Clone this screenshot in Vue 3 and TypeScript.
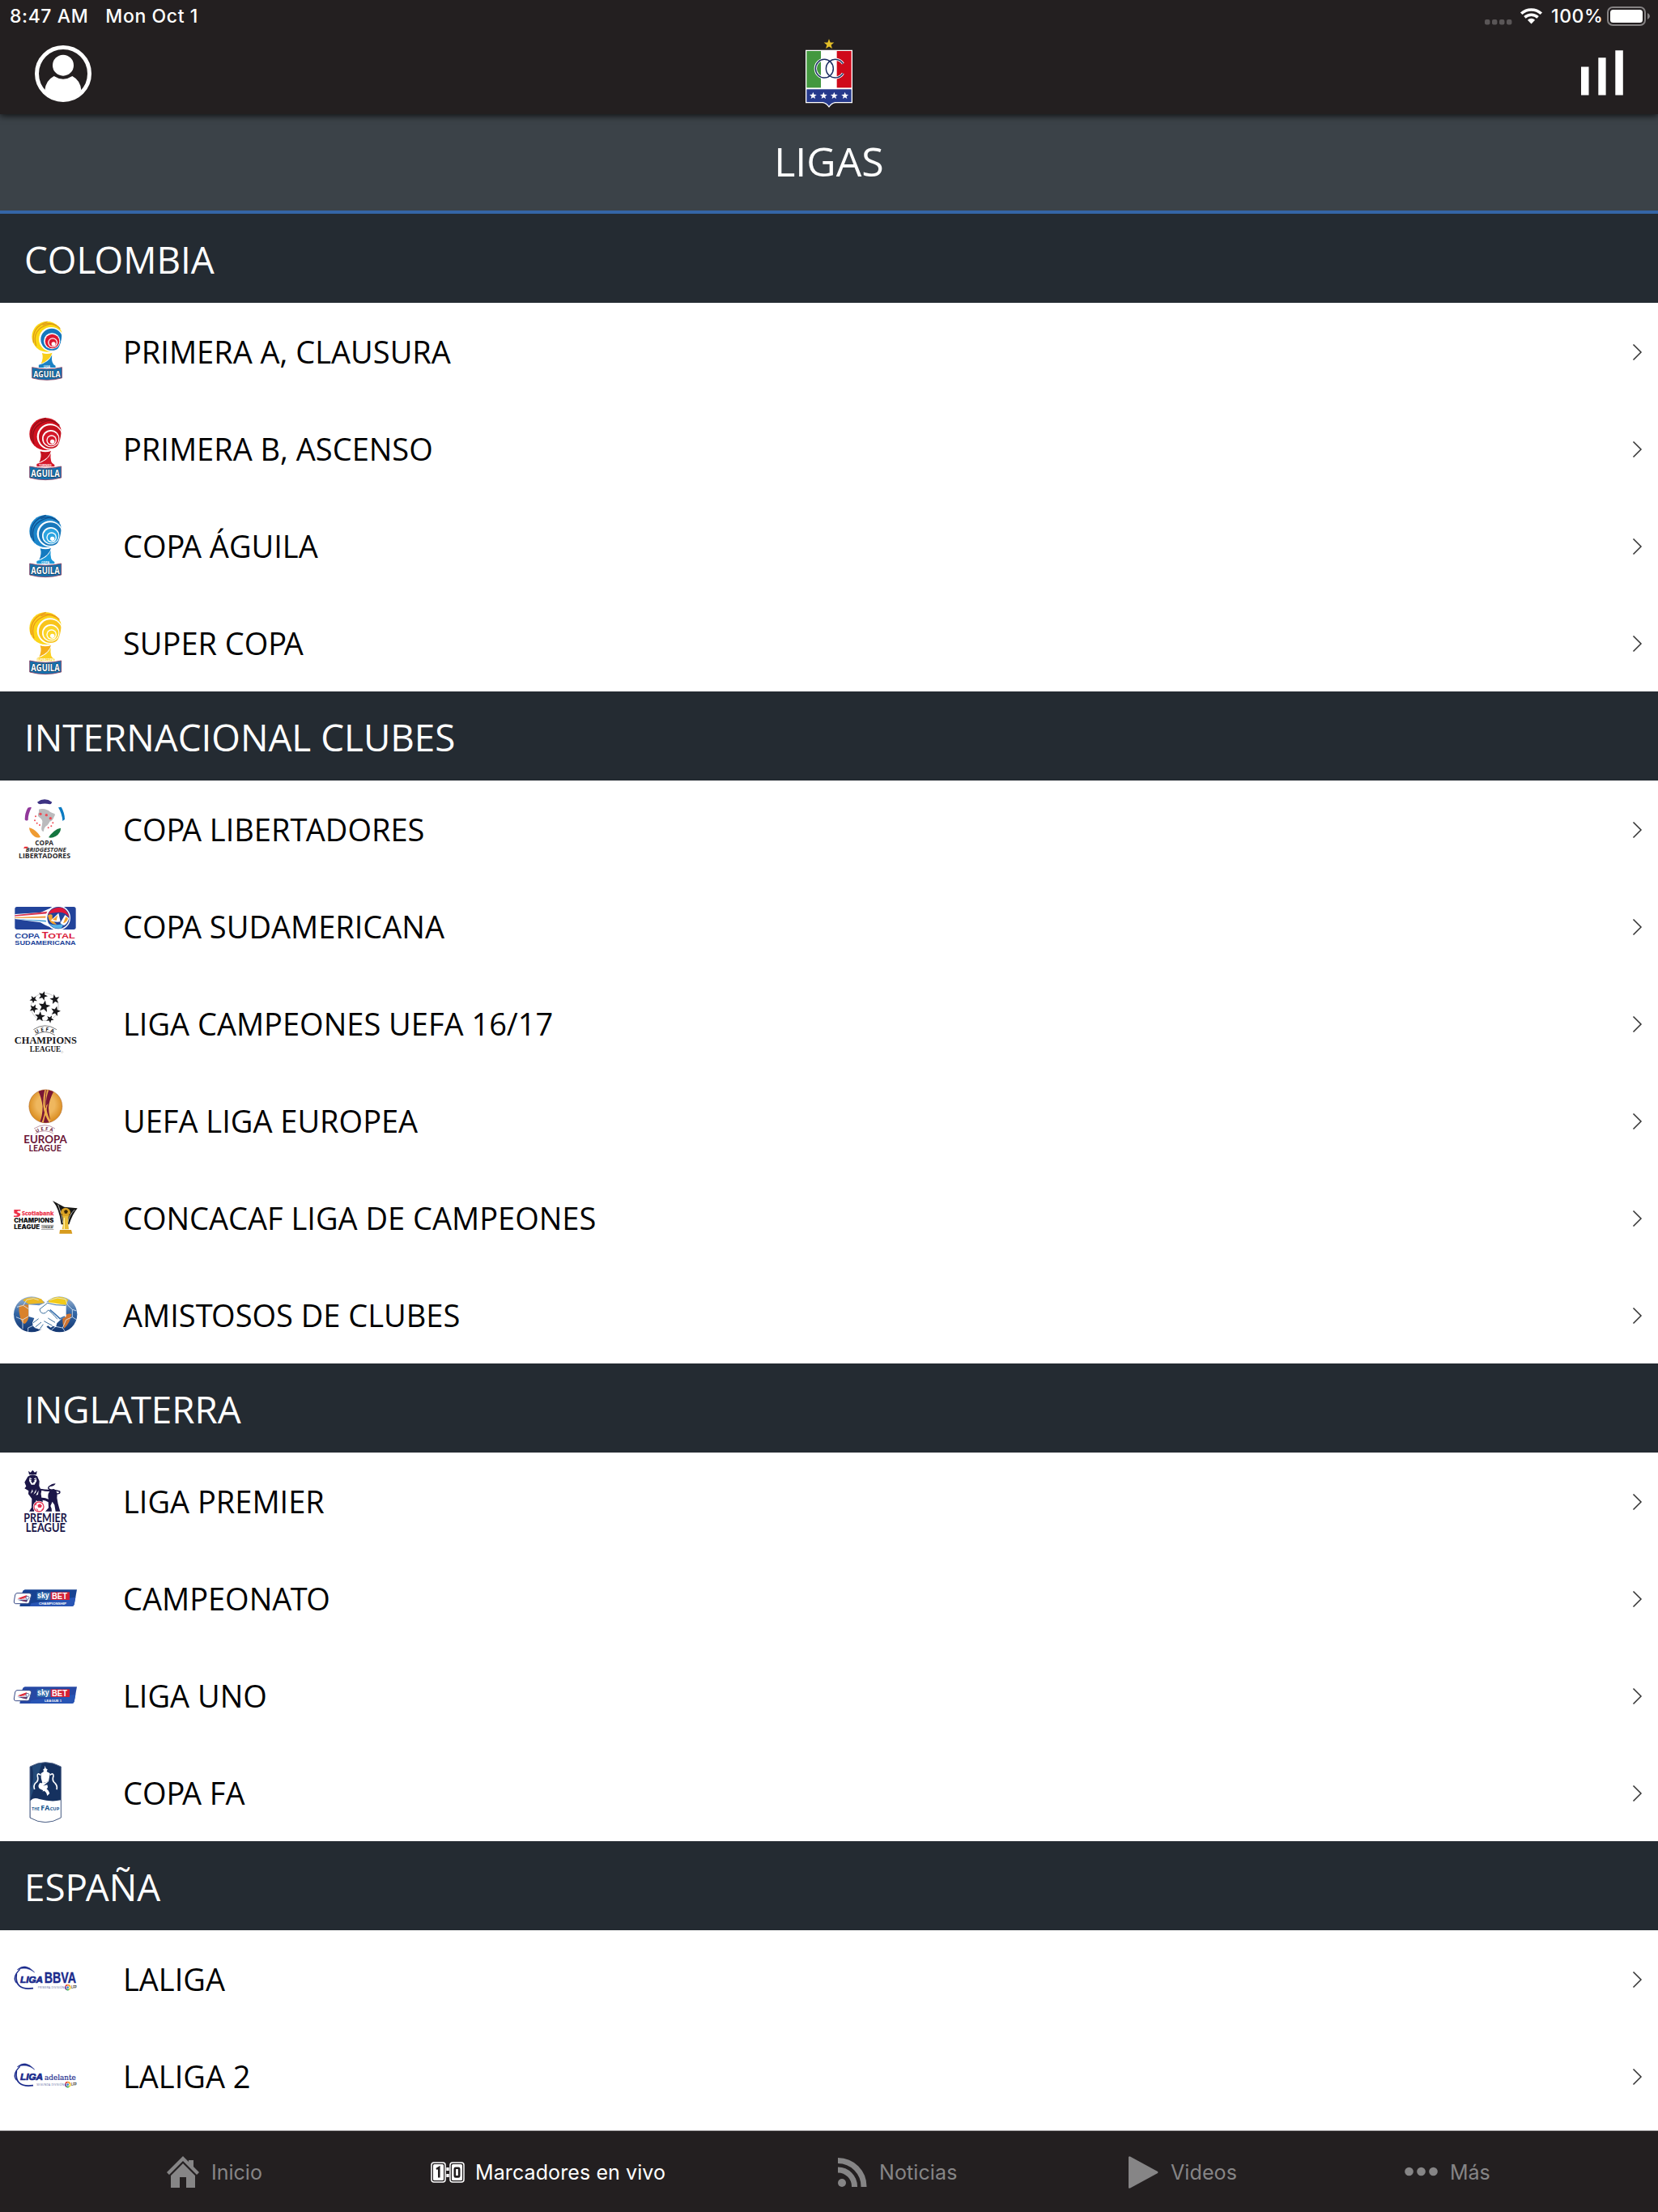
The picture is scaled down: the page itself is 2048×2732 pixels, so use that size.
<script setup lang="ts">
interface League {
  name: string
  logo: string
}
interface Section {
  title: string
  leagues: League[]
}

const sections: Section[] = [
  {
    title: 'COLOMBIA',
    leagues: [
      { name: 'PRIMERA A, CLAUSURA', logo: 'aguila-liga' },
      { name: 'PRIMERA B, ASCENSO', logo: 'aguila-torneo' },
      { name: 'COPA ÁGUILA', logo: 'aguila-copa' },
      { name: 'SUPER COPA', logo: 'aguila-super' },
    ],
  },
  {
    title: 'INTERNACIONAL CLUBES',
    leagues: [
      { name: 'COPA LIBERTADORES', logo: 'libertadores' },
      { name: 'COPA SUDAMERICANA', logo: 'sudamericana' },
      { name: 'LIGA CAMPEONES UEFA 16/17', logo: 'champions' },
      { name: 'UEFA LIGA EUROPEA', logo: 'europa' },
      { name: 'CONCACAF LIGA DE CAMPEONES', logo: 'concacaf' },
      { name: 'AMISTOSOS DE CLUBES', logo: 'friendly' },
    ],
  },
  {
    title: 'INGLATERRA',
    leagues: [
      { name: 'LIGA PREMIER', logo: 'premier' },
      { name: 'CAMPEONATO', logo: 'sky-championship' },
      { name: 'LIGA UNO', logo: 'sky-league' },
      { name: 'COPA FA', logo: 'facup' },
    ],
  },
  {
    title: 'ESPAÑA',
    leagues: [
      { name: 'LALIGA', logo: 'bbva' },
      { name: 'LALIGA 2', logo: 'adelante' },
    ],
  },
]

// Capital pairs that need tighter kerning than the font gives them.
interface Piece {
  text: string
  kern: string
}
const kernOf: Record<string, string> = { PA: 'kern-wide', AT: 'kern', TA: 'kern', TO: 'kern', LO: 'kern' }
const pieces = (label: string): Piece[] => {
  const out: Piece[] = []
  let run = ''
  for (let i = 0; i < label.length; i++) {
    const kern = kernOf[label.slice(i, i + 2)]
    if (kern) {
      if (run) out.push({ text: run, kern: '' })
      out.push({ text: label[i], kern })
      run = ''
    } else {
      run += label[i]
    }
  }
  if (run) out.push({ text: run, kern: '' })
  return out
}

interface Trophy {
  outer: string
  shade: string
  middle: string
  inner: string
  stem: string
  base: string
  label: string
  transform: string
}

const trophies: Record<string, Trophy> = {
  'aguila-liga': { outer: '#fbd913', shade: '#dd9a1a', middle: '#1478bd', inner: '#dc1830', stem: '#f8cf1c', base: '#1b82c4', label: 'LIGA', transform: 'translate(15.1 27.5) scale(.944)' },
  'aguila-torneo': { outer: '#d1101f', shade: '#8d0f18', middle: '#c4101d', inner: '#d5182a', stem: '#c4101d', base: '#d5182a', label: 'TORNEO', transform: '' },
  'aguila-copa': { outer: '#1c86cb', shade: '#0e4f8e', middle: '#1878bb', inner: '#2ba4e0', stem: '#157bc0', base: '#1c97d8', label: 'COPA', transform: '' },
  'aguila-super': { outer: '#fcd51a', shade: '#ea951a', middle: '#f8c41c', inner: '#fbd529', stem: '#f5ae1a', base: '#fbd020', label: 'SUPERCOPA', transform: '' },
}

const star = (cx: number, cy: number, r: number, turn = 0): string => {
  const pts: string[] = []
  for (let i = 0; i < 10; i++) {
    const rad = i % 2 ? r * 0.42 : r
    const a = ((turn - 90 + i * 36) * Math.PI) / 180
    pts.push(`${(cx + rad * Math.cos(a)).toFixed(1)},${(cy + rad * Math.sin(a)).toFixed(1)}`)
  }
  return pts.join(' ')
}

const championStars: string[] = [
  star(164, 129, 23, 10), star(159, 90, 18, 20), star(203, 103, 19, -10), star(206, 147, 19, 15),
  star(185, 176, 15, 30), star(148, 167, 20, 5), star(125, 137, 17, 25), star(124, 103, 15, 40),
]
const redDots = [[150, 136, 5], [172, 140, 5], [187, 152, 5], [132, 145, 3], [129, 160, 3], [137, 170, 3], [147, 177, 3], [179, 187, 3], [190, 181, 3], [196, 169, 3]]
</script>

<template>
  <div class="screen">
    <header class="top">
      <div class="status">
        <span class="time">8:47 AM</span>
        <span class="date">Mon Oct 1</span>
        <span class="grow"></span>
        <svg class="dots" width="34" height="7" viewBox="0 0 34 7"><rect v-for="i in 4" :key="i" :x="(i - 1) * 9" y="0" width="6.4" height="6.4" rx="2" fill="#5a5657" /></svg>
        <svg class="wifi" width="30" height="22" viewBox="0 0 30 22" fill="none" stroke="#fff">
          <path d="M2.2 7.8a18 18 0 0 1 24.6 0" stroke-width="3.6" /><path d="M6.4 12.4a12 12 0 0 1 16.2 0" stroke-width="3.5" />
          <path d="M14.5 20.5l-4.6-4.8a6.6 6.6 0 0 1 9.2 0z" fill="#fff" stroke="none" />
        </svg>
        <span class="pct">100%</span>
        <svg class="battery" width="54" height="24" viewBox="0 0 54 24">
          <rect x="1" y="1" width="46" height="22" rx="6" fill="none" stroke="#858283" stroke-width="2" /><rect x="4" y="4" width="40" height="16" rx="3.5" fill="#fff" /><path d="M50 8q3 1.500 3 4t-3 4z" fill="#858283" />
        </svg>
      </div>
      <div class="nav">
        <svg class="user" width="70" height="70" viewBox="0 0 210 210">
          <circle cx="105" cy="105" r="97.5" fill="none" stroke="#fff" stroke-width="15" /><circle cx="105" cy="74" r="39" fill="#fff" />
          <path d="M71 114q34 22 68 0q30 16 33 52q-28 38-67 38t-68-38q4-36 34-52z" fill="#fff" />
        </svg>
        <svg class="crest" width="60" height="88" viewBox="162 50 180 264">
          <polygon :points="star(252, 73, 20)" fill="#e3be28" />
          <path d="M165 94H339V291H276Q262 293 252 308Q242 293 228 291H165z" fill="#fff" />
          <path d="M169 98H222V234H169z" fill="#43983f" /><path d="M281 98H335V234H281z" fill="#cf0a1b" />
          <path d="M169 240H335V287H274Q260 290 252 302Q244 290 230 287H169z" fill="#263a8c" />
          <g fill="none" stroke="#fff" stroke-width="10"><ellipse cx="235" cy="163" rx="33" ry="34" /><path d="M304 145A34 34 0 1 0 304 181" /></g>
          <g fill="none" stroke="#1b2d61" stroke-width="4.5"><ellipse cx="235" cy="163" rx="33" ry="34" /><path d="M304 145A34 34 0 1 0 304 181" /></g>
          <polygon v-for="x in [193, 232, 271, 311]" :key="x" :points="star(x, 264, 14)" fill="#fff" />
        </svg>
        <svg class="bars" width="54" height="56" viewBox="0 0 54 56" fill="#fff"><path d="M1 20.500h9.500V55.500H1zM22.300 9.300h9.300V55.500h-9.300zM43.300.300h9.500V55.500h-9.500z" /></svg>
      </div>
    </header>

    <h1 class="title">LIGAS</h1>

    <main class="list">
      <section v-for="s in sections" :key="s.title">
        <h2 class="heading"><span v-for="(p, i) in pieces(s.title)" :key="i" :class="p.kern">{{ p.text }}</span></h2>
        <div v-for="l in s.leagues" :key="l.name" class="row">
          <!-- Águila trophies share one shape in four colourways -->
          <svg v-if="trophies[l.logo]" class="logo" viewBox="48 432 240 240">
            <g :transform="trophies[l.logo].transform || undefined">
              <circle cx="169" cy="498" r="60" :fill="trophies[l.logo].outer" />
              <g fill="none" :stroke="trophies[l.logo].shade" stroke-width="4"><path d="M116 522Q106 460 170 439" /><path d="M126 535Q105 467 180 448Q205 449 220 466" /><path d="M151 452Q180 438 207 456" /></g>
              <circle cx="185" cy="508" r="48" fill="#fff" /><circle cx="187" cy="509" r="43" :fill="trophies[l.logo].middle" />
              <circle cx="188" cy="515" r="32" fill="#fff" /><circle cx="189" cy="516" r="28" :fill="trophies[l.logo].inner" />
              <circle cx="191" cy="521" r="19" fill="#fff" /><circle cx="191" cy="521" r="15" :fill="trophies[l.logo].inner" /><circle cx="194" cy="526" r="8" fill="#fff" />
              <path d="M227 479Q250 510 230 545L194 562Q227 540 227 479z" fill="#fff" />
              <path d="M149 562Q170 568 189 561Q183 588 145 604Q156 582 149 562z" :fill="trophies[l.logo].stem" />
              <path d="M188 570Q184 606 202 612V619H136V609Q176 599 188 570z" :fill="trophies[l.logo].base" />
              <text x="168" y="618" text-anchor="middle" class="sans bold" font-size="11" fill="#fff">{{ trophies[l.logo].label }}</text>
              <path d="M110 618Q168 632 227 618V660Q168 676 110 660z" fill="#1672af" stroke="#8b4060" stroke-width="2.5" />
              <text x="168" y="657" text-anchor="middle" class="sans bold" font-size="35" textLength="106" lengthAdjust="spacingAndGlyphs" fill="#fff" stroke="#12304e" stroke-width="3.5" paint-order="stroke">AGUILA</text>
            </g>
          </svg>

          <svg v-else-if="l.logo === 'libertadores'" class="logo" viewBox="48 72 240 240">
            <path d="M138 92Q165 72 193 92Q190 100 184 100Q166 95 148 100Q141 99 138 92z" fill="#3c3282" />
            <path d="M103 113Q112 109 117 112Q104 136 104 158Q97 164 92 157Q92 132 103 113z" fill="#91389a" />
            <path d="M216 112L227 110Q240 132 240 156L232 162Q230 135 216 112z" fill="#0a7ac2" />
            <path d="M108 187Q124 190 138 205Q144 210 150 221Q140 227 128 220Q109 206 108 187z" fill="#ef9b32" />
            <path d="M225 188Q225 207 207 218Q192 227 180 223Q187 211 200 200Q212 190 225 188z" fill="#14753f" />
            <path d="M144 119Q154 115 166 118L180 123Q183 129 202 135Q206 139 200 147Q196 161 184 164Q179 178 169 182Q160 192 162 201Q152 200 154 186L157 166Q158 155 143 146Q138 139 144 130z" fill="#bbbbbd" />
            <circle v-for="(d, i) in redDots" :key="i" :cx="d[0]" :cy="d[1]" :r="d[2]" fill="#ee4b55" />
            <g class="sans bold" fill="#2c2b2d" text-anchor="middle"><text x="164" y="251" font-size="24" textLength="68" lengthAdjust="spacingAndGlyphs">COPA</text>
              <text x="170" y="275" font-size="23" font-style="italic" textLength="150" lengthAdjust="spacingAndGlyphs">BRIDGESTONE</text>
              <text x="165" y="300" font-size="27" textLength="192" lengthAdjust="spacingAndGlyphs">LIBERTADORES</text></g>
            <path d="M91 257H104L100 263H87z" fill="#e8222e" />
          </svg>

          <svg v-else-if="l.logo === 'sudamericana'" class="logo" viewBox="48 432 240 240">
            <rect x="55" y="480" width="226" height="84" rx="8" fill="#22439a" />
            <path d="M55 507L150 501Q175 490 205 478V560Q178 556 150 538L55 525z" fill="#fff" />
            <path d="M55 511L190 496L190 504L55 515z" fill="#d93955" /><path d="M55 519L180 514V521L55 522z" fill="#f0a04c" /><path d="M55 525L190 531V538z" fill="#4aa2dc" />
            <circle cx="215" cy="521" r="46" fill="#fff" /><circle cx="216" cy="521" r="41" fill="#22439a" />
            <path d="M178 507Q187 485 216 482Q248 481 257 520Q242 496 210 501Q190 502 178 507z" fill="#df173b" />
            <path d="M177 512Q188 504 194 511Q191 530 210 545Q184 548 177 512z" fill="#f3a22f" />
            <path d="M181 542Q205 551 230 544Q238 550 225 560Q199 564 181 542z" fill="#56b3e7" />
            <path d="M188 531L217 503L224 535Q206 538 188 531z" fill="#fff" /><path d="M195 528L214 511L209 531z" fill="#f3a22f" /><path d="M241 510L256 522Q250 543 237 549Q228 545 223 540z" fill="#fff" /><path d="M244 517L252 523Q249 537 234 541z" fill="#f3a22f" />
            <g class="arial bold"><text x="55" y="596" font-size="26" textLength="93" lengthAdjust="spacingAndGlyphs" fill="#22439a">COPA</text>
              <text x="155" y="597" font-size="34" textLength="24" lengthAdjust="spacingAndGlyphs" fill="#d91937">T</text><text x="178" y="597" font-size="27" textLength="100" lengthAdjust="spacingAndGlyphs" fill="#d91937">OTAL</text>
              <text x="55" y="620" font-size="24" textLength="226" lengthAdjust="spacingAndGlyphs" fill="#22439a">SUDAMERICANA</text></g>
          </svg>

          <svg v-else-if="l.logo === 'champions'" class="logo" viewBox="48 72 240 240" fill="#17171a">
            <circle cx="166" cy="131" r="51" fill="none" stroke="#999" stroke-width="1.5" />
            <polygon v-for="(p, i) in championStars" :key="i" :points="p" />
            <path d="M124 215Q166 186 210 215M130 235Q166 212 203 235" fill="none" stroke="#333" stroke-width="2" />
            <path id="arc-champions" d="M133 231Q166 211 205 231" fill="none" />
            <text class="sans bold" font-size="19"><textPath href="#arc-champions" textLength="68">UEFA</textPath></text>
            <g class="serif bold" text-anchor="middle"><text x="169" y="266" font-size="36" textLength="231" lengthAdjust="spacingAndGlyphs">CHAMPIONS</text><text x="168" y="296" font-size="29" textLength="115" lengthAdjust="spacingAndGlyphs">LEAGUE</text></g>
            <circle cx="230" cy="298" r="3.5" fill="none" stroke="#999" />
          </svg>

          <svg v-else-if="l.logo === 'europa'" class="logo" viewBox="48 432 240 240" fill="#6b1737">
            <defs><radialGradient id="gold" cx=".5" cy=".45" r=".55"><stop offset=".5" stop-color="#efb75e" /><stop offset="1" stop-color="#d98a1c" /></radialGradient><clipPath id="ball"><circle cx="169" cy="499" r="61" /></clipPath></defs>
            <circle cx="169" cy="499" r="61.5" fill="url(#gold)" stroke="#a45f24" stroke-width="1.5" />
            <g clip-path="url(#ball)"><path d="M139 437H202Q180 480 180 505Q182 540 190 562H146Q158 535 158 500Q154 465 139 437z" fill="#7a1735" />
              <path d="M166 437H181Q166 480 172 510Q179 543 189 553L183 560Q163 530 160 497Q159 468 166 437z" fill="#eeb04c" /><path d="M177 490Q168 535 160 563H153Q166 530 168 500z" fill="#eeb04c" /><path d="M172 437Q165 480 170 505" fill="none" stroke="#7a1735" stroke-width="3" /></g>
            <path d="M126 582Q166 556 204 582M131 600Q166 580 198 600" fill="none" stroke="#9c6077" stroke-width="2" />
            <path id="arc-europa" d="M135 597Q166 579 202 597" fill="none" />
            <text class="sans bold" font-size="17"><textPath href="#arc-europa" textLength="62">UEFA</textPath></text>
            <g class="lato bold" text-anchor="middle"><text x="168" y="636" font-size="41" textLength="160" lengthAdjust="spacingAndGlyphs">EUROPA</text><text x="167" y="666" font-size="32" textLength="121" lengthAdjust="spacingAndGlyphs">LEAGUE</text></g>
          </svg>

          <svg v-else-if="l.logo === 'concacaf'" class="logo" viewBox="48 42 240 240">
            <path d="M52 132H76V137Q64 136 63 141L76 147Q76 158 66 159H51V154Q62 156 65 151L52 145z" fill="#ed3349" />
            <text x="81" y="152" class="sans bold" font-size="20" textLength="118" lengthAdjust="spacingAndGlyphs" fill="#ed3349" stroke="#ed3349" stroke-width=".8">Scotiabank</text>
            <g class="mont black" fill="#121214"><text x="52" y="179" font-size="21" textLength="147" lengthAdjust="spacingAndGlyphs">CHAMPIONS</text><text x="52" y="204" font-size="21" textLength="95" lengthAdjust="spacingAndGlyphs">LEAGUE</text></g>
            <path d="M153 190H199M153 205H199" stroke="#666" stroke-width="2" /><text x="154" y="201" class="sans bold" font-size="9.5" textLength="44" fill="#333">CONCACAF</text>
            <path d="M195 99L238 122L287 127Q269 148 256 187H227Q221 130 195 99z" fill="#151514" /><path d="M215 113Q230 150 233 182M277 132Q255 153 251 182" fill="none" stroke="#fff" stroke-width="2" />
            <circle cx="243" cy="143" r="18" fill="#d9a224" /><path d="M232 156H254Q250 180 255 205H230Q237 180 232 156z" fill="#e8bc36" /><path d="M222 207H264L268 221H220z" fill="#d79b1e" />
            <path d="M237 137l8-5 7 6-4 8h-8zM226 146l5 3-2 6zM255 150l5-3-3 7z" fill="#3a2808" /><path d="M238 162V204" stroke="#fff1a2" stroke-width="4" />
          </svg>

          <svg v-else-if="l.logo === 'friendly'" class="logo" viewBox="48 402 240 240">
            <defs><linearGradient id="globe" x2="0" y2="1"><stop offset="0" stop-color="#9fb6d2" /><stop offset=".45" stop-color="#3568a6" /><stop offset="1" stop-color="#123570" /></linearGradient></defs>
            <circle cx="117" cy="520" r="66" fill="url(#globe)" /><circle cx="220" cy="520" r="66" fill="url(#globe)" />
            <path d="M72 486L106 484V530Q104 545 92 555Q78 553 74 527Q68 505 72 486z" fill="#d9822b" /><path d="M84 467Q111 450 153 463L164 478L106 482z" fill="#ecb822" /><path d="M180 468Q216 444 252 465L245 485L180 483z" fill="#f2cb1a" /><path d="M232 530Q252 514 265 519Q260 552 238 572Q231 560 232 530z" fill="#ce7432" />
            <g fill="none" stroke="#dbe8f5" stroke-width="2.5"><path d="M63 493L86 487L106 500M60 530L84 540V574M84 540L105 528M104 586V570L122 562L143 574M86 487L99 466L124 461L143 467M191 578L206 565L232 570L240 582M232 570L245 540L268 530L284 540M268 530V502L284 507M184 467L213 459L243 464L250 485L268 502" /></g>
            <path d="M106 484L145 487L174 474L245 486V528L231 534L211 553L207 568L197 563L188 569L178 562L164 572L149 577L138 572L130 571L122 562L120 551L127 534L106 528z" fill="#fff" />
            <path d="M147 501L176 478L207 485L243 487M147 501Q150 521 168 515L179 504Q192 514 213 538M178 534L204 550M163 545L194 562M122 552L143 536M131 567L153 549M147 575L160 557" fill="none" stroke="#3d719f" stroke-width="3" />
            <path d="M185 503Q211 525 222 536L240 528" fill="none" stroke="#3d74af" stroke-width="5" />
          </svg>

          <svg v-else-if="l.logo === 'premier'" class="logo" viewBox="48 72 240 240" fill="#1c1648">
            <path d="M108 94L105 80L113 86L121 77L129 86L137 80L135 94z" />
            <path d="M103 101Q121 88 138 100L146 118L145 136L150 146Q180 152 200 147Q216 156 211 180L215 202L223 230H206L202 206L194 194L187 210Q193 220 192 230H168L180 217L179 196Q168 189 158 188V197H147L134 189L129 214L126 230H108L117 216L118 183L105 166L106 154L91 145L97 137L91 122z" />
            <path d="M154 152Q168 157 184 156Q174 168 180 185Q166 178 154 179Q149 166 154 152z" fill="#fff" />
            <path d="M200 164Q225 168 221 156Q207 152 189 151Q174 146 182 138Q188 133 198 131" fill="none" stroke="#1c1648" stroke-width="4.5" />
            <path d="M186 137Q190 127 206 127Q201 138 186 137z" />
            <path d="M110 104L118 109L115 120L121 124L128 120L126 109L133 105L136 117L128 131L116 131L108 117zM113 165L120 148L122 157zM124 167L134 148L133 160zM133 170L143 152L141 168z" fill="#fff" />
            <path d="M112 111L119 113M126 113L132 111M121 126V117" stroke="#1c1648" stroke-width="3" />
            <circle cx="144" cy="213" r="22" fill="#fff" /><circle cx="144" cy="213" r="18" fill="#fff" stroke="#e53e5b" stroke-width="4" /><path d="M139 206L148 202L156 209L151 217L141 215zM128 204L137 198L133 209zM132 219L139 221L143 231zM155 222L161 218L154 230z" fill="#e5304f" />
            <g class="lato bold" text-anchor="middle"><text x="168" y="269" font-size="43" textLength="161" lengthAdjust="spacingAndGlyphs">PREMIER</text><text x="169" y="306" font-size="43" textLength="147" lengthAdjust="spacingAndGlyphs">LEAGUE</text></g>
          </svg>

          <svg v-else-if="l.logo.startsWith('sky')" class="logo" viewBox="48 432 240 240">
            <path d="M92 520H285L275 575Q273 582 265 582H73L82 532Q84 522 92 520z" :fill="l.logo === 'sky-league' ? '#2648a4' : '#174292'" /><path d="M116 570L280 548L275 575Q273 582 265 582H110z" fill="#2855b5" />
            <path d="M63 533H108Q117 533 116 541L109 567Q107 572 101 572H58Q51 571 52 564L56 540Q57 534 63 533z" fill="#fff" stroke="#384a87" stroke-width="3" />
            <path d="M65 553L98 541L103 545L78 555z" fill="#dc2636" /><path d="M64 557L103 557L99 566z" fill="#2d4488" /><path d="M83 553L103 550M82 560L99 562" stroke="#dc2636" stroke-width="2" /><circle cx="102" cy="550" r="6" fill="#edf3fb" stroke="#344d8c" stroke-width="2" />
            <path d="M137 529H188V558H137z" fill="#326bac" /><path d="M188 529H258V558H188z" fill="#d41f35" />
            <g class="arial bold" fill="#fff"><text x="138" y="552" font-size="30" textLength="44" lengthAdjust="spacingAndGlyphs">sky</text><text x="192" y="554" font-size="30" textLength="57" lengthAdjust="spacingAndGlyphs">BET</text>
              <text v-if="l.logo === 'sky-championship'" x="144" y="575" font-size="12" textLength="102" lengthAdjust="spacingAndGlyphs">CHAMPIONSHIP</text><text v-else x="165" y="575" font-size="12" textLength="63" lengthAdjust="spacingAndGlyphs">LEAGUE 1</text></g>
          </svg>

          <svg v-else-if="l.logo === 'facup'" class="logo" viewBox="48 342 240 240">
            <path d="M111 366Q168 334 226 366V555Q168 589 111 555z" fill="#15315f" /><path d="M112 452Q130 410 119 365Q140 355 155 354L132 430L111 490z" fill="#285483" opacity=".7" />
            <path d="M112 493Q125 477 146 486Q190 498 225 490V555Q168 588 112 555z" fill="#fff" /><path d="M111 366Q168 334 226 366V555Q168 589 111 555z" fill="none" stroke="#52658a" stroke-width="3" />
            <g fill="#fff"><path d="M167 362L170 373L176 376L173 384L185 391Q183 405 180 421L157 427Q150 408 152 391L162 384L160 376L165 373z" /><path d="M148 425Q152 430 180 421Q163 435 157 441Q181 449 184 465L175 474Q174 458 153 451Q135 443 148 425z" /><path d="M146 441L175 433Q183 449 158 458Q164 446 146 441z" /></g>
            <path d="M151 397Q137 387 139 401Q145 418 131 427Q123 437 128 450M185 397Q199 387 198 401Q191 418 204 427Q214 438 210 451" fill="none" stroke="#fff" stroke-width="5" />
            <g class="sans bold" fill="#16548d"><text x="118" y="529" font-size="17" textLength="28" lengthAdjust="spacingAndGlyphs">THE</text><text x="151" y="529" font-size="27" textLength="33" lengthAdjust="spacingAndGlyphs">FA</text><text x="185" y="529" font-size="17" textLength="35" lengthAdjust="spacingAndGlyphs">CUP</text></g>
          </svg>

          <svg v-else class="logo" viewBox="48 102 240 240">
            <g fill="none" stroke="#1b2b8c"><path d="M74 187Q43 217 62 238" stroke-width="4" /><path d="M61 204Q53 267 123 257" stroke-width="5" /></g>
            <path d="M64 188Q94 160 128 198Q97 174 64 188z" fill="#1b2b8c" stroke="#1b2b8c" stroke-width="1.5" />
            <g fill="#1b2b8c"><text x="75" y="237" class="arial bold" font-style="italic" font-size="34" stroke="#1b2b8c" stroke-width="2.2" textLength="84" lengthAdjust="spacingAndGlyphs">LIGA</text>
              <text v-if="l.logo === 'bbva'" x="164" y="237" class="arial bold" font-size="53" stroke="#1b2b8c" textLength="118" lengthAdjust="spacingAndGlyphs">BBVA</text>
              <text v-else x="165" y="237" class="slab" font-size="27" stroke="#1b2b8c" stroke-width=".6" textLength="116" lengthAdjust="spacingAndGlyphs">adelante</text></g>
            <text :x="l.logo === 'bbva' ? 140 : 136" y="259" class="sans" font-size="10" :textLength="l.logo === 'bbva' ? 98 : 101" fill="#5a67a0">{{ l.logo === 'bbva' ? 'PRIMERA DIVISIÓN' : 'SEGUNDA DIVISIÓN' }}</text>
            <g fill="none" stroke-width="5"><path d="M243 250A9 9 0 0 1 251 245" stroke="#e63a2e" /><path d="M251 245A9 9 0 0 1 260 252" stroke="#f4a52a" /><path d="M260 252A9 9 0 0 1 255 262" stroke="#ead936" /><path d="M255 262A9 9 0 0 1 246 261" stroke="#37a85a" /><path d="M246 261A9 9 0 0 1 243 250" stroke="#783f91" /></g><circle cx="251" cy="254" r="4" fill="#3583c8" />
            <text x="264" y="259" class="arial bold" font-size="14" textLength="20" lengthAdjust="spacingAndGlyphs" fill="#333">LFP</text>
          </svg>
          <span class="name"><span v-for="(p, i) in pieces(l.name)" :key="i" :class="p.kern">{{ p.text }}</span></span>
          <svg class="chevron" width="14" height="24" viewBox="0 0 14 24"><path d="M2.500 3.500L12 13L2.500 22.500" fill="none" stroke="#333" stroke-width="1.500" /></svg>
        </div>
      </section>
    </main>

    <nav class="tabs">
      <div class="tab"><svg width="40" height="40" viewBox="0 0 40 40" fill="#868586"><path d="M20 0L27 7V5H33V13L40 20L37 23L20 6L3 23L0 20z" /><path d="M20 9L35 24V39H24V26H16V39H5V24z" /></svg><span class="w1">Inicio</span></div>
      <div class="tab active"><svg width="42" height="40" viewBox="0 0 42 40"><g fill="none" stroke="#fff" stroke-width="1.5"><rect x="1" y="8" width="17" height="24" rx="3" /><rect x="24" y="8" width="17" height="24" rx="3" /></g><rect x="3" y="10" width="13" height="20" rx="1.5" fill="#fff" /><rect x="26" y="10" width="13" height="20" rx="1.5" fill="#fff" /><path d="M19.300 14h3.400v4h-3.400zM19.300 22h3.400v4h-3.400z" fill="#fff" /><path d="M7 16L10.300 14V26.500" fill="none" stroke="#231f20" stroke-width="2.6" /><rect x="29.8" y="14.8" width="5.4" height="10.6" rx="1" fill="none" stroke="#231f20" stroke-width="2.6" /></svg><span class="w2">Marcadores en vivo</span></div>
      <div class="tab"><svg width="36" height="36" viewBox="0 0 36 36"><circle cx="5" cy="31" r="5" fill="#868586" /><path d="M0 15A20.500 20.500 0 0 1 20.500 36M0 3.500A32 32 0 0 1 32 36" fill="none" stroke="#868586" stroke-width="7" /></svg><span class="w3">Noticias</span></div>
      <div class="tab"><svg width="37" height="40" viewBox="0 0 37 40"><path d="M0 1Q1 0 2 .500L36 19Q37 20 36 21L2 39.500Q0 40 0 39z" fill="#868586" /></svg><span class="w4">Videos</span></div>
      <div class="tab"><svg width="41" height="40" viewBox="0 0 41 40" fill="#868586"><circle cx="5.5" cy="19" r="5.3" /><circle cx="20.5" cy="19" r="5.3" /><circle cx="35.5" cy="19" r="5.3" /></svg><span class="w5">Más</span></div>
    </nav>
  </div>
</template>

<style>
body { margin: 0; background: #fff; }
</style>

<style scoped>
.screen { width: 2048px; height: 2732px; display: flex; flex-direction: column; overflow: hidden; background: #fff; font-family: "Open Sans", "Noto Sans", sans-serif; color: #000; }
.top { flex: none; height: 141px; background: #231f20; box-shadow: 0 2px 8px rgba(0, 0, 0, .75); position: relative; z-index: 1; color: #fff; }
.status { display: flex; align-items: center; height: 40px; padding: 0 9px 0 12px; font: 500 23px/40px Inter, "Liberation Sans", sans-serif; letter-spacing: .6px; }
.date { margin-left: 21px; }
.grow { flex: 1; }
.dots { margin: 14px 9px 0 0; }
.wifi { margin: 0 9px 0 0; }
.pct { width: 65px; margin-right: 4px; }
.nav { display: grid; grid-template-columns: 1fr 60px 1fr; align-items: start; height: 101px; }
.user { margin: 16px 0 0 43px; }
.crest { margin-top: 7px; }
.bars { justify-self: end; margin: 22px 42px 0 0; }
.title { flex: none; box-sizing: border-box; height: 123px; margin: 0; border-bottom: 4px solid #3465a6; background: #3b4248; color: #fff; text-align: center; font-size: 50px; font-weight: 400; line-height: 117px; }
.list { flex: 1; min-height: 0; overflow: hidden; }
.heading { height: 110px; margin: 0; padding-left: 30px; background: #242b32; color: #fff; font-size: 45.8px; font-weight: 400; line-height: 112px; }
.row { display: flex; align-items: center; height: 120px; padding: 0 19px 0 16px; }
.logo { width: 80px; height: 80px; flex: none; overflow: visible; }
.name { flex: 1; margin-left: 56px; font-size: 38px; line-height: 120px; white-space: pre; }
.kern { letter-spacing: -.04em; }
.kern-wide { letter-spacing: -.09em; }
.heading .kern-wide { letter-spacing: -.05em; }
.sans { font-family: "Open Sans", sans-serif; }
.arial { font-family: "Liberation Sans", sans-serif; }
.serif { font-family: "Liberation Serif", serif; }
.slab { font-family: "DejaVu Serif", serif; }
.lato { font-family: Lato, sans-serif; }
.mont { font-family: Inter, sans-serif; }
.bold { font-weight: 700; }
.black { font-weight: 900; }
.tabs { flex: none; display: flex; align-items: center; height: 101px; box-sizing: border-box; padding: 2px 0 0 206px; background: #231f20; box-shadow: inset 0 1px #a5a3a4; font: 400 25px/40px Inter, "Liberation Sans", sans-serif; color: #868586; }
.tab { display: flex; align-items: center; gap: 15px; }
.tab span { white-space: nowrap; }
.active { color: #fff; gap: 13px; letter-spacing: .1px; }
.w1 { width: 271px; }
.w2 { width: 448px; }
.w3 { width: 308px; letter-spacing: .1px; }
.w4 { width: 289px; letter-spacing: .1px; }
</style>
